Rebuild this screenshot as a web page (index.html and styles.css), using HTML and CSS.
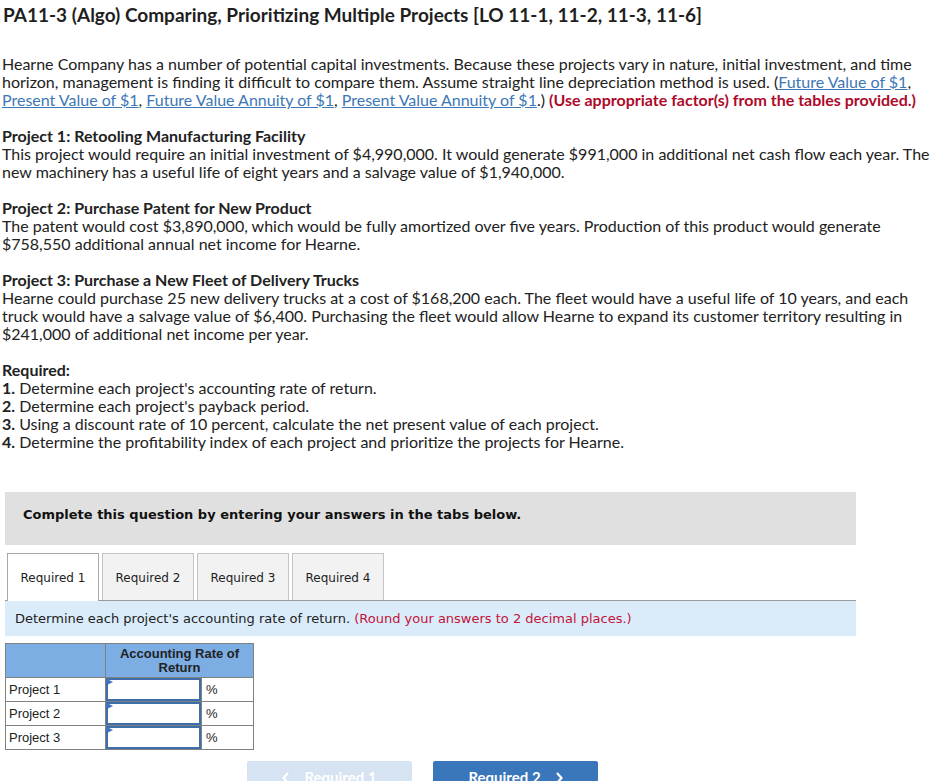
FILE: index.html
```html
<!DOCTYPE html>
<html>
<head>
<meta charset="utf-8">
<link rel="stylesheet" href="styles.css">
</head>
<body>
<div class="page">
  <h1 class="title">PA11-3 (Algo) Comparing, Prioritizing Multiple Projects [LO 11-1, 11-2, 11-3, 11-6]</h1>
  <p class="para">Hearne Company has a number of potential capital investments. Because these projects vary in nature, initial investment, and time horizon, management is finding it difficult to compare them. Assume straight line depreciation method is used. (<a class="lnk" href="#">Future Value of $1</a>, <a class="lnk" href="#">Present Value of $1</a>, <a class="lnk" href="#">Future Value Annuity of $1</a>, <a class="lnk" href="#">Present Value Annuity of $1</a>.) <b class="warn">(Use appropriate factor(s) from the tables provided.)</b></p>
  <p class="para"><b>Project 1: Retooling Manufacturing Facility</b><br>This project would require an initial investment of $4,990,000. It would generate $991,000 in additional net cash flow each year. The new machinery has a useful life of eight years and a salvage value of $1,940,000.</p>
  <p class="para"><b>Project 2: Purchase Patent for New Product</b><br>The patent would cost $3,890,000, which would be fully amortized over five years. Production of this product would generate $758,550 additional annual net income for Hearne.</p>
  <p class="para"><b>Project 3: Purchase a New Fleet of Delivery Trucks</b><br>Hearne could purchase 25 new delivery trucks at a cost of $168,200 each. The fleet would have a useful life of 10 years, and each truck would have a salvage value of $6,400. Purchasing the fleet would allow Hearne to expand its customer territory resulting in $241,000 of additional net income per year.</p>
  <p class="para"><b>Required:</b><br><b>1.</b> Determine each project's accounting rate of return.<br><b>2.</b> Determine each project's payback period.<br><b>3.</b> Using a discount rate of 10 percent, calculate the net present value of each project.<br><b>4.</b> Determine the profitability index of each project and prioritize the projects for Hearne.</p>

  <div class="banner">Complete this question by entering your answers in the tabs below.</div>

  <div class="tabs">
    <div class="tab active">Required 1</div>
    <div class="tab">Required 2</div>
    <div class="tab">Required 3</div>
    <div class="tab">Required 4</div>
  </div>
  <div class="instr">Determine each project's accounting rate of return. <span class="round">(Round your answers to 2 decimal places.)</span></div>

  <table class="grid">
    <tr class="head"><th class="blank"></th><th colspan="2">Accounting Rate of<br>Return</th></tr>
    <tr><td class="lbl">Project 1</td><td class="inp"><span class="box"></span></td><td class="pct">%</td></tr>
    <tr><td class="lbl">Project 2</td><td class="inp"><span class="box"></span></td><td class="pct">%</td></tr>
    <tr><td class="lbl">Project 3</td><td class="inp"><span class="box"></span></td><td class="pct">%</td></tr>
  </table>

  <div class="nav">
    <div class="btn prev"><svg class="chev" width="8" height="12" viewBox="0 0 8 12"><polyline points="6,1 1.5,6 6,11" fill="none" stroke="#fff" stroke-width="2.2"/></svg><span>Required 1</span></div>
    <div class="btn next"><span>Required 2</span><svg class="chev" width="8" height="12" viewBox="0 0 8 12"><polyline points="2,1 6.5,6 2,11" fill="none" stroke="#fff" stroke-width="2.2"/></svg></div>
  </div>
</div>
</body>
</html>
```
FILE: styles.css
```css
html, body {
  margin: 0;
  padding: 0;
  background: #fff;
}
.page {
  width: 930px;
  padding: 0 0 0 2px;
  font-family: Lato, "Open Sans", sans-serif;
  font-size: 16px;
  line-height: 18px;
  color: #222;
}
.title {
  margin: 5px 0 0 1px;
  font-size: 19px;
  line-height: 20px;
  font-weight: bold;
  color: #1f1f1f;
}
.para {
  margin: 30px 0 0 0;
}
.para + .para {
  margin-top: 18px;
}
.para b {
  font-weight: bold;
}
.lnk {
  color: #3d77b6;
  text-decoration: underline;
}
.warn {
  color: #ad0a2a;
}
.banner {
  margin: 41px 0 0 3px;
  width: 851px;
  box-sizing: border-box;
  height: 53px;
  padding: 15px 18px 0 18px;
  background: #e0e0e0;
  font-family: "DejaVu Sans", Verdana, sans-serif;
  font-size: 13px;
  line-height: 16px;
  font-weight: bold;
  color: #111;
}
.tabs {
  margin: 8px 0 0 3px;
  width: 851px;
  display: flex;
  gap: 3px;
  padding-left: 2px;
  box-sizing: border-box;
  border-bottom: 1px solid #9a9a9a;
  height: 48px;
}
.tab {
  width: 92px;
  height: 47px;
  box-sizing: border-box;
  border: 1px solid #c4c4c4;
  border-bottom: none;
  background: #f2f2f2;
  font-family: "DejaVu Sans", Verdana, sans-serif;
  font-size: 12px;
  line-height: 14px;
  color: #222;
  display: flex;
  align-items: center;
  justify-content: center;
  padding-top: 1px;
}
.tab.active {
  background: #fff;
  border-color: #a8a8a8;
  height: 48px;
}
.instr {
  margin-left: 3px;
  width: 851px;
  height: 35px;
  box-sizing: border-box;
  padding: 10px 0 0 10px;
  background: #daecf9;
  font-family: "DejaVu Sans", Verdana, sans-serif;
  font-size: 13px;
  line-height: 16px;
  color: #222;
}
.round {
  color: #c3133a;
}
.grid {
  margin: 7px 0 0 3px;
  border-collapse: collapse;
  font-family: "Liberation Sans", Arial, sans-serif;
  font-size: 13px;
  color: #222;
}
.grid th, .grid td {
  border: 1px solid #808080;
  padding: 0;
}
.grid .head th {
  background: #7cade3;
  height: 33px;
  font-weight: bold;
  line-height: 14px;
  color: #222;
  text-align: center;
}
.grid .blank {
  width: 99px;
}
.grid td {
  height: 23px;
}
.grid .lbl {
  width: 96px;
  padding-left: 3px;
}
.grid .inp {
  width: 95px;
}
.box {
  display: block;
  height: 23px;
  box-sizing: border-box;
  border: 2px solid #3f6fab;
  position: relative;
}
.box::before {
  content: "";
  position: absolute;
  left: -1px;
  top: -1px;
  border-left: 6px solid #3f74c0;
  border-top: 3px solid transparent;
  border-bottom: 3px solid transparent;
}
.grid .pct {
  width: 47px;
  padding-left: 4px;
}
.nav {
  margin: 11px 0 0 245px;
  display: flex;
  gap: 21px;
}
.btn {
  width: 165px;
  height: 36px;
  border-radius: 2px;
  font-family: Lato, "Open Sans", sans-serif;
  font-weight: bold;
  font-size: 15px;
  color: #fff;
  display: flex;
  align-items: flex-start;
  justify-content: center;
  gap: 14px;
  padding-top: 8px;
  box-sizing: border-box;
  line-height: 16px;
}
.btn .chev {
  margin-top: 3px;
}
.prev {
  background: #d6e3f2;
}
.next {
  background: #3a76ba;
}
```
